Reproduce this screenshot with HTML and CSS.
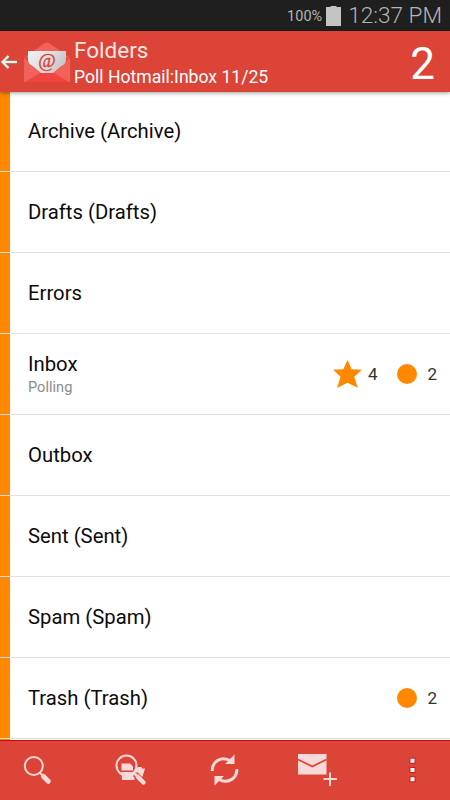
FILE: index.html
```
<!DOCTYPE html>
<html lang="en">
<head>
    <meta charset="UTF-8">
    <meta name="viewport" content="width=device-width, initial-scale=1.0">
    <title>Folders</title>
    <link rel="stylesheet" href="styles.css">
</head>
<body>
    <div class="status">
        <span class="percent">100%</span>
        <svg class="battery" width="15" height="20" viewBox="0 0 15 20"><path d="M0 1h4.500v-1h6v1h4.500v19h-15z" fill="#c4c4c4"/></svg>
        <span class="time">12:37 PM</span>
    </div>

    <header class="header">
        <svg class="back" width="17" height="18" viewBox="0 0 17 18"><path d="M8.500 3L2.500 9l6 6M3 9H17" fill="none" stroke="#a9988a" stroke-width="3"/><path d="M8.500 3L2.500 9l6 6M3 9H17" fill="none" stroke="#e9f3e6" stroke-width="2"/></svg>
        <svg class="logo" width="46" height="42" viewBox="0 0 46 42">
            <defs>
                <linearGradient id="paper" x1="0" x2="1" y1="0" y2="0.4">
                    <stop offset="0" stop-color="#f1f1f1"/>
                    <stop offset="0.5" stop-color="#e2e2e2"/>
                    <stop offset="1" stop-color="#c8c8c8"/>
                </linearGradient>
            </defs>
            <path d="M0 17L20 2.500q3-2 6 0L46 17v23q0 1-1 1H1q-1 0-1-1z" fill="#f0625a"/>
            <path d="M0 17l8 7v-9zM46 17l-8 7v-9z" fill="#f04440"/>
            <path d="M4 10h38v8c0 5-3 6-6 8l-7 6H17l-7-6c-3-2-6-3-6-8z" fill="url(#paper)"/>
            <path d="M1 41L16 32h14l15 9z" fill="#f04440"/>
            <text x="23" y="26" text-anchor="middle">@</text>
        </svg>
        <div class="titles">
            <h1>Folders</h1>
            <p>Poll Hotmail:Inbox 11/25</p>
        </div>
        <span class="total">2</span>
    </header>

    <ul class="folders">
        <li><span class="name">Archive (Archive)</span></li>
        <li><span class="name">Drafts (Drafts)</span></li>
        <li><span class="name">Errors</span></li>
        <li>
            <div class="info">
                <span class="name">Inbox</span>
                <span class="state">Polling</span>
            </div>
            <svg class="star" width="29" height="28" viewBox="0 0 29 28"><path d="M14.500 0l4.200 9.300 10.200.5-7.700 7 3.500 11-10.200-5-10.500 5.200 3.600-11.200L0 9.800l10.300-.5z" fill="#ff8800"/></svg>
            <span class="count">4</span>
            <span class="dot"></span>
            <span class="count">2</span>
        </li>
        <li><span class="name">Outbox</span></li>
        <li><span class="name">Sent (Sent)</span></li>
        <li><span class="name">Spam (Spam)</span></li>
        <li>
            <span class="name">Trash (Trash)</span>
            <span class="dot"></span>
            <span class="count">2</span>
        </li>
        <li></li>
    </ul>

    <nav class="toolbar">
        <svg width="75" height="60" viewBox="0 0 75 60">
            <circle cx="33.800" cy="26" r="9" fill="none" stroke="#f9d9d7" stroke-width="2"/>
            <path d="M40 33l2 2" stroke="#f9d9d7" stroke-width="2"/>
            <path d="M43.500 36.500l4.800 4.800" stroke="#f9d9d7" stroke-width="5" stroke-linecap="round"/>
        </svg>
        <svg width="112" height="60" viewBox="75 0 112 60">
            <path d="M121.500 23.500h8.500l3 3v4h-11.500zM121.500 32h10l3 3v5h-12.500zM136 29l2-2h3.500l.5 1.500h3l-2.500 8-2 1-6-6z" fill="#f9d9d7"/>
            <circle cx="126.500" cy="25.500" r="10" fill="none" stroke="#f9d9d7" stroke-width="2"/>
            <path d="M135 34l8.500 8.500" stroke="#db4437" stroke-width="6"/>
            <path d="M133.500 32.500l4 4" stroke="#f9d9d7" stroke-width="2.500"/>
            <path d="M138 37l5.500 5.500" stroke="#f9d9d7" stroke-width="4.500" stroke-linecap="round"/>
        </svg>
        <svg width="76" height="60" viewBox="187 0 76 60">
            <path d="M212.300 31c-.5-9 9-16 18.500-10M236.800 29c.5 9-9 16-18.500 10" fill="none" stroke="#f9d9d7" stroke-width="3"/>
            <path d="M234.500 14.500v9.500h-9.500zM214.500 45.500V36h9.500z" fill="#f9d9d7"/>
        </svg>
        <svg width="112" height="60" viewBox="263 0 112 60">
            <path d="M298 14h28.500v20.500H298z" fill="#f9d9d7"/>
            <path d="M298 19.500l14.300 7 14.200-7" fill="none" stroke="#db4437" stroke-width="1.700"/>
            <path d="M330 32v14M323 39h14" stroke="#db4437" stroke-width="4"/>
            <path d="M330 32.500v13.500M323.500 39h13.500" stroke="#f9d9d7" stroke-width="2"/>
        </svg>
        <svg width="75" height="60" viewBox="375 0 75 60">
            <path d="M409.500 17.700h6v6h-6zM409.500 27h6v6h-6zM409.500 36.300h6v6h-6z" fill="#ce1f25"/>
            <path d="M410.500 18.700h4v4h-4zM410.500 28h4v4h-4zM410.500 37.300h4v4h-4z" fill="#fff"/>
        </svg>
    </nav>
</body>
</html>
```
FILE: styles.css
```
* {
    box-sizing: border-box;
}

body {
    display: flex;
    flex-direction: column;
    width: 450px;
    height: 800px;
    margin: 0;
    overflow: hidden;
    background-color: #fff;
    color: #0c0c0c;
    font-family: Roboto, sans-serif;
}

.status {
    display: flex;
    justify-content: flex-end;
    align-items: center;
    flex: none;
    height: 31px;
    padding-right: 8px;
    background-color: #1f1f1f;
    color: #b4b4b4;
}

.percent {
    margin-right: 4px;
    padding-top: 2px;
    font-size: 14.500px;
}

.battery {
    margin-right: 7px;
}

.time {
    font-size: 22.600px;
    font-weight: 300;
    white-space: nowrap;
}

.header {
    display: flex;
    align-items: center;
    flex: none;
    height: 61px;
    padding-right: 15px;
    background-color: #db4437;
    color: #fff;
    box-shadow: 0 1px 4px rgba(0, 0, 0, 0.4);
    z-index: 1;
}

.back {
    margin-right: 7px;
}

.logo {
    margin-right: 4px;
}

.logo text {
    font: 19px "Liberation Serif", serif;
    fill: #e23a2e;
    stroke: #e23a2e;
    stroke-width: 0.3px;
}

.titles {
    flex: 1;
    padding-top: 4px;
}

h1 {
    margin: 0;
    font-size: 22.500px;
    line-height: 27px;
    font-weight: 400;
    color: #fbe6e4;
}

.titles p {
    margin: 0;
    font-size: 17.600px;
    line-height: 27px;
}

.total {
    padding-top: 4px;
    font-size: 44px;
}

.folders {
    flex: 1;
    min-height: 0;
    margin: -1px 0 0;
    padding: 0;
    overflow: hidden;
    list-style-type: none;
}

.folders li {
    display: flex;
    align-items: center;
    height: 81px;
    padding: 0 13px 1px 28px;
    border-bottom: 1px solid #e0e0e0;
    background: linear-gradient(to right, #ff8800 10px, #fff 10px) padding-box;
}

.name {
    flex: 1;
    font-size: 20.300px;
    line-height: 24px;
}

.info {
    display: flex;
    flex-direction: column;
    flex: 1;
    padding-top: 3px;
}

.state {
    color: #8c8c8c;
    font-size: 14.600px;
    line-height: 22px;
}

.star {
    margin-right: 6px;
}

.count {
    padding-top: 1px;
    color: #333;
    font-size: 17px;
}

.dot {
    width: 20px;
    height: 20px;
    margin: 0 10px 0 20px;
    border-radius: 50%;
    background-color: #ff8800;
}

.toolbar {
    display: flex;
    flex: none;
    height: 60px;
    background-color: #db4437;
    box-shadow: inset 0 1px #dc0000;
}
```
